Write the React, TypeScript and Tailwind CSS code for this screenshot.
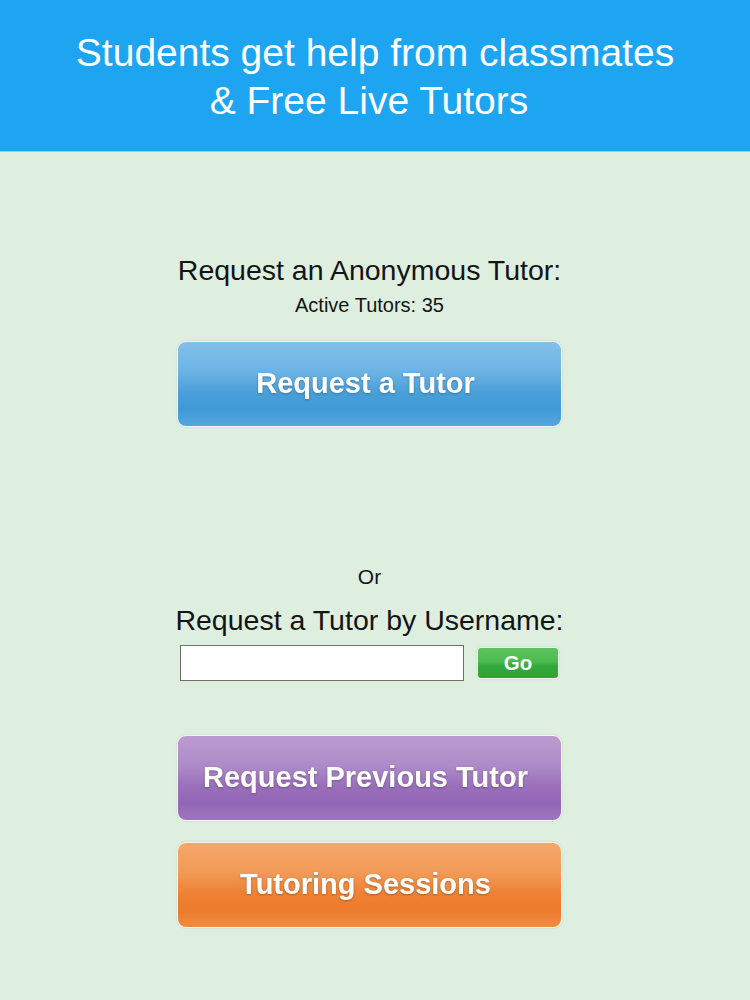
const font = { fontFamily: '"Liberation Sans", Arial, sans-serif' };

const BigButton = ({ label, tone }: { label: string; tone: string }) => (
  <button
    className={`w-[385px] h-[86px] pr-[8px] rounded-[9px] border border-white/90 text-white font-bold text-[29px] shadow-[0_0_2px_rgba(0,0,0,0.15)] ${tone}`}
  >
    <span className="drop-shadow-[0_1px_1px_rgba(0,0,0,0.25)]">{label}</span>
  </button>
);

export default function App() {
  return (
    <div className="w-[750px] h-[1000px] bg-[#dfefdf] flex flex-col" style={font}>
      <header className="h-[152px] bg-[#1da5f2] border-b border-[#8fd0f7] flex flex-col items-center justify-center pt-[3px]">
        <h1 className="text-white text-[39px] leading-[48px] text-center font-normal">
          <span className="block">Students get help from classmates</span>
          <span className="block pr-[12px]">& Free Live Tutors</span>
        </h1>
      </header>

      <main className="flex flex-col items-center pr-[11px]">
        <p className="mt-[102px] text-[28.5px] leading-[32px] text-[#141414]">
          Request an Anonymous Tutor:
        </p>
        <p className="mt-[7px] text-[20px] leading-[24px] text-[#141414]">
          Active Tutors: 35
        </p>
        <div className="mt-[24px]">
          <BigButton
            label="Request a Tutor"
            tone="bg-[linear-gradient(to_bottom,#82c1ea_0%,#6cb3e4_35%,#4a9fd9_60%,#3f9ad7_80%,#55a7de_100%)]"
          />
        </div>

        <p className="mt-[138px] text-[21px] leading-[24px] text-[#141414]">Or</p>
        <p className="mt-[15px] text-[28.5px] leading-[32px] text-[#141414]">
          Request a Tutor by Username:
        </p>
        <div className="mt-[9px] flex items-center gap-[13px] w-[385px] h-[36px]">
          <input
            type="text"
            className="w-[284px] h-[36px] bg-white border border-[#6e6e6e] outline-none ml-[3px]"
          />
          <button className="w-[82px] h-[32px] rounded-[4px] border border-white/90 text-white font-bold text-[20.5px] bg-[linear-gradient(to_bottom,#5cc45e_0%,#4cba4f_45%,#33a83b_60%,#2ea537_100%)] shadow-[0_0_2px_rgba(0,0,0,0.15)]">
            Go
          </button>
        </div>

        <div className="mt-[54px] flex flex-col gap-[21px]">
          <BigButton
            label="Request Previous Tutor"
            tone="bg-[linear-gradient(to_bottom,#bb9bd0_0%,#ad8bc8_35%,#9a6fba_60%,#9266b5_80%,#9e76bd_100%)]"
          />
          <BigButton
            label="Tutoring Sessions"
            tone="bg-[linear-gradient(to_bottom,#f5a86b_0%,#f29a57_35%,#ee8133_60%,#ec7b2b_80%,#f08c42_100%)]"
          />
        </div>
      </main>
    </div>
  );
}
